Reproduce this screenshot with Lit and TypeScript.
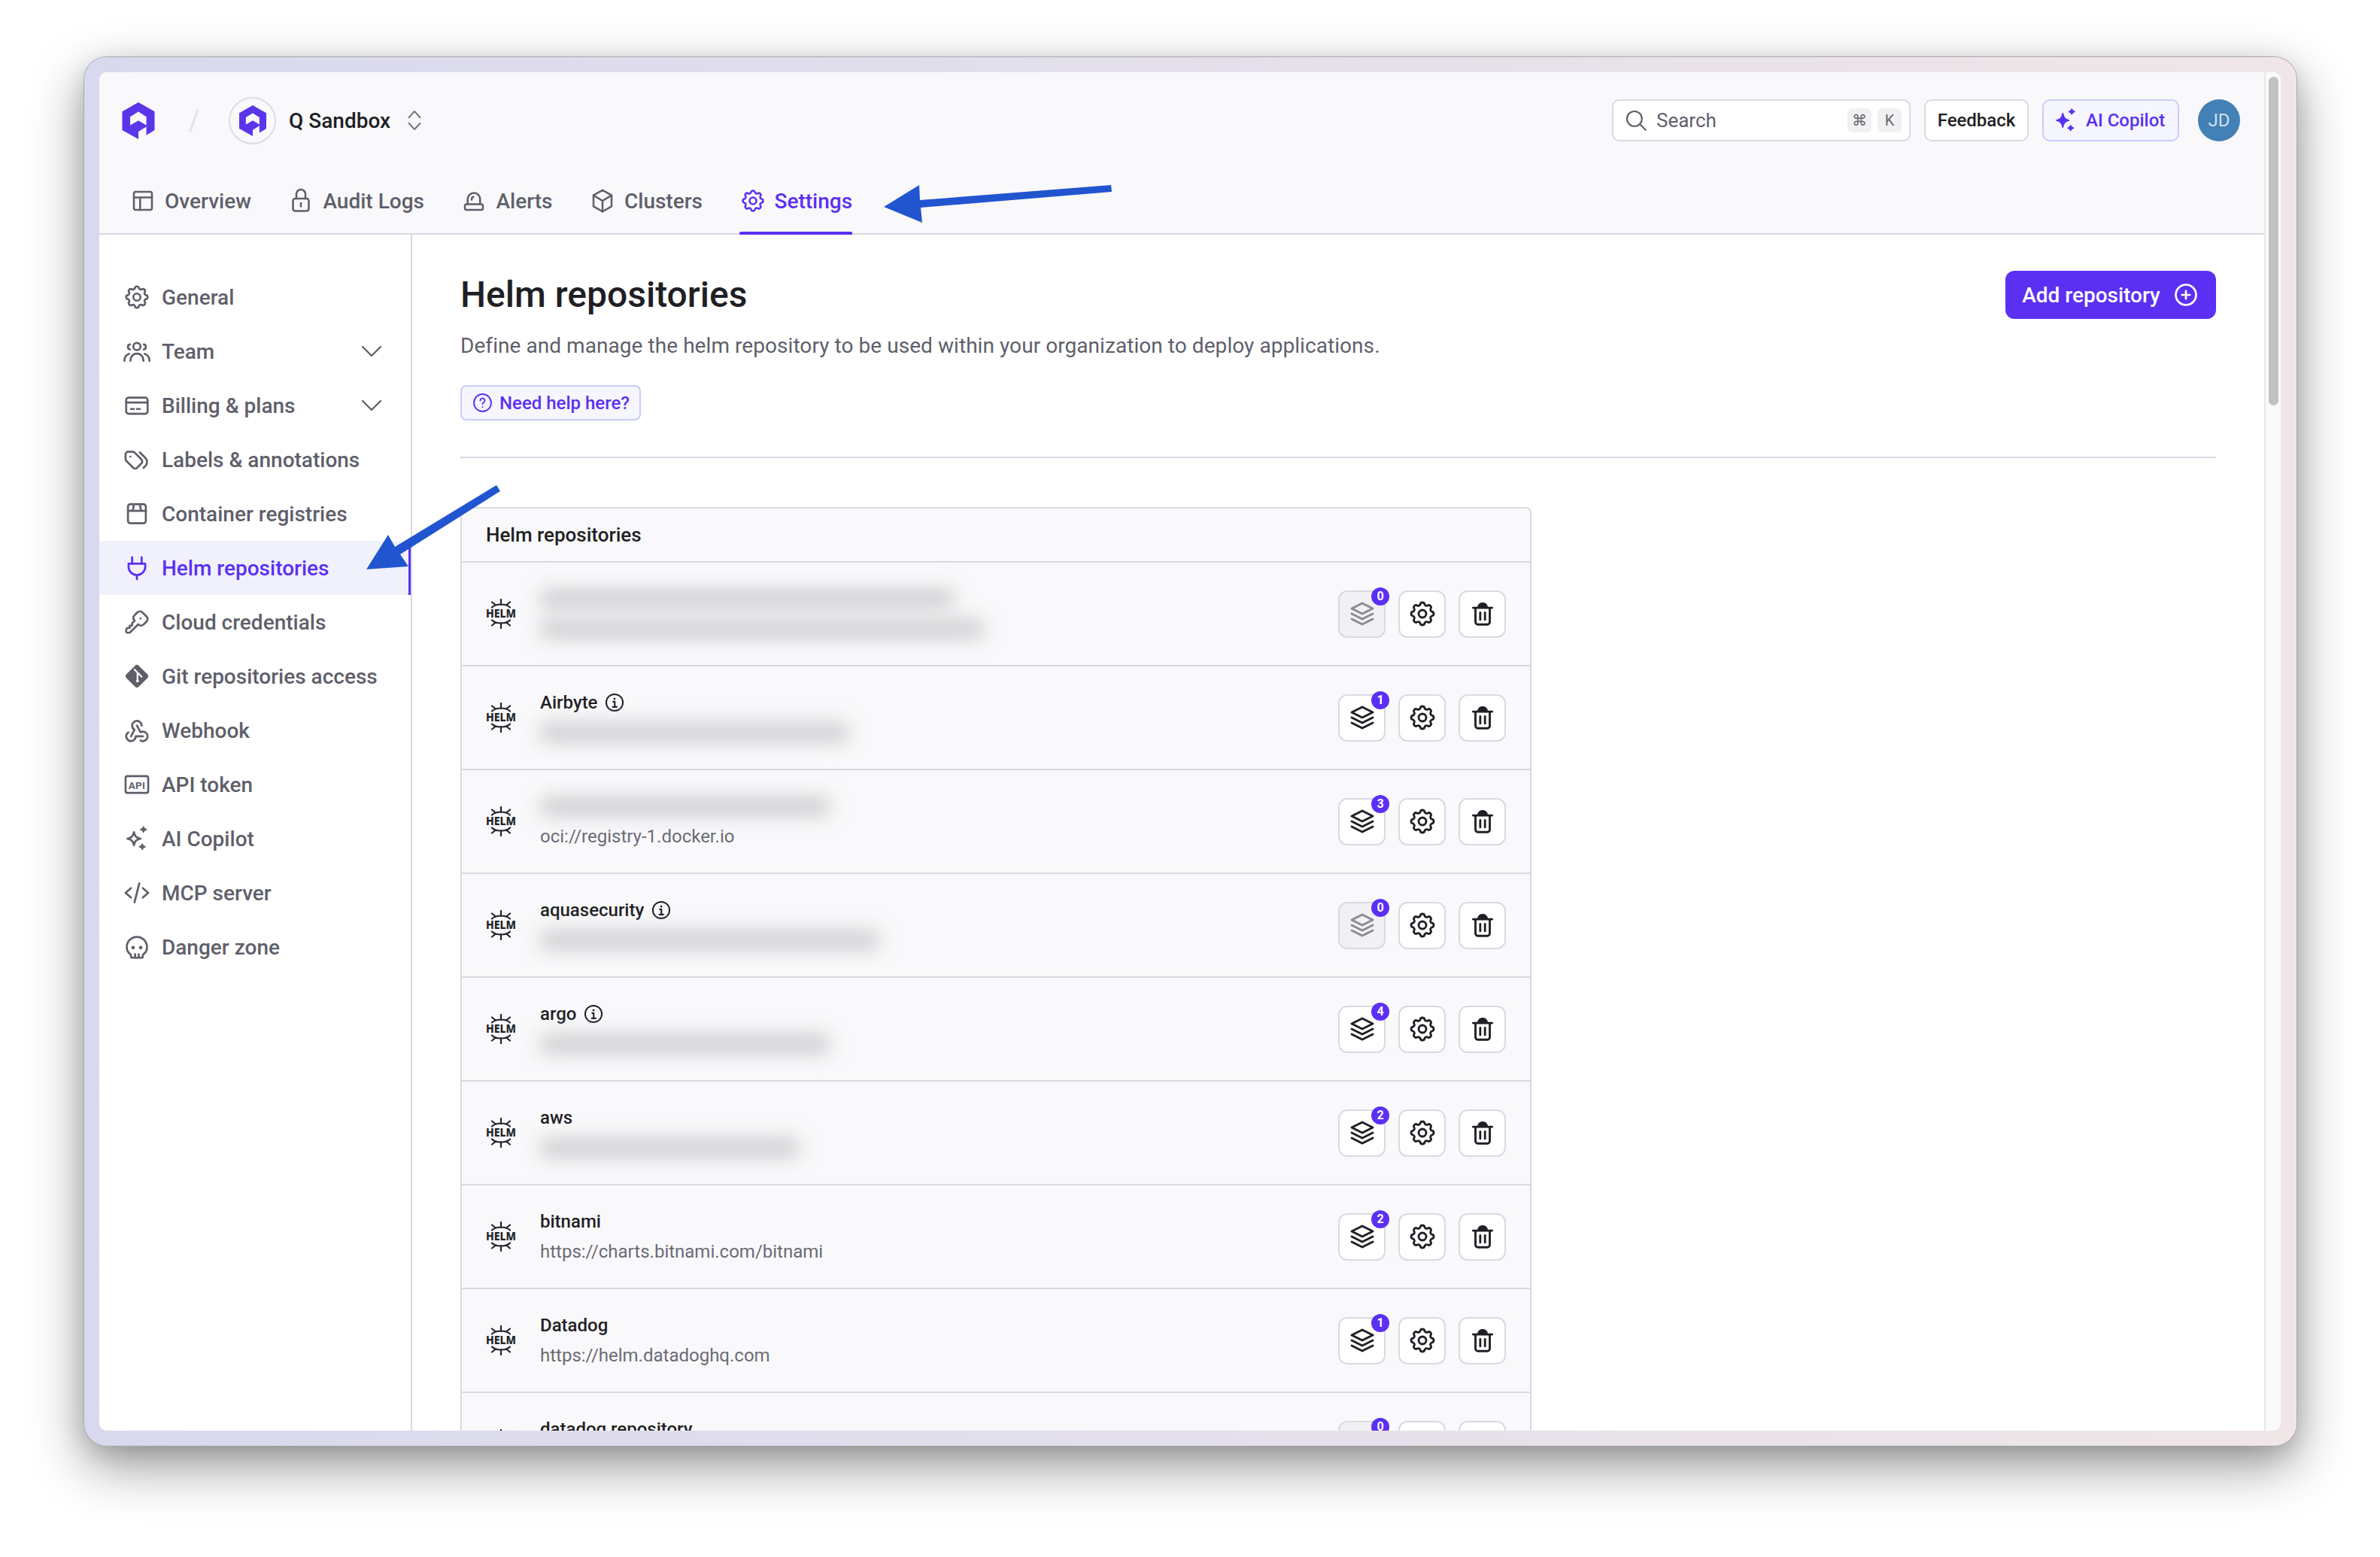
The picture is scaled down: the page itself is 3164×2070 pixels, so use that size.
import { LitElement, html, css, svg, nothing } from "lit";
import { customElement } from "lit/decorators.js";

const i = {
  gear: svg`<path d="M10.325 4.317c.426 -1.756 2.924 -1.756 3.35 0a1.724 1.724 0 0 0 2.573 1.066c1.543 -.94 3.31 .826 2.37 2.37a1.724 1.724 0 0 0 1.065 2.572c1.756 .426 1.756 2.924 0 3.35a1.724 1.724 0 0 0 -1.066 2.573c.94 1.543 -.826 3.31 -2.37 2.37a1.724 1.724 0 0 0 -2.572 1.065c-.426 1.756 -2.924 1.756 -3.35 0a1.724 1.724 0 0 0 -2.573 -1.066c-1.543 .94 -3.31 -.826 -2.37 -2.37a1.724 1.724 0 0 0 -1.065 -2.572c-1.756 -.426 -1.756 -2.924 0 -3.35a1.724 1.724 0 0 0 1.066 -2.573c-.94 -1.543 .826 -3.31 2.37 -2.37c1 .608 2.296 .07 2.572 -1.065z"/><circle cx="12" cy="12" r="3"/>`,
  team: svg`<circle cx="12" cy="8" r="3"/><path d="M6.5 20c0 -3.6 2.4 -6 5.5 -6s5.500 2.400 5.500 6"/><path d="M6.200 10.500a2.200 2.200 0 0 1 0 -4.300"/><path d="M17.800 10.500a2.200 2.200 0 0 0 0 -4.300"/><path d="M1.500 20c0 -3 1.300 -5 4 -5.800"/><path d="M22.500 20c0 -3 -1.300 -5 -4 -5.800"/>`,
  card: svg`<rect x="3" y="5.500" width="18" height="13.500" rx="2"/><path d="M3 9.500h18"/><path d="M7 15h2.500M12 15h2.500"/>`,
  tags: svg`<path d="M2.500 7.500v4.172a2 2 0 0 0 .586 1.414l5.710 5.710a2.410 2.410 0 0 0 3.408 0l3.592 -3.592a2.410 2.410 0 0 0 0 -3.408l-5.710 -5.710a2 2 0 0 0 -1.414 -.586h-4.172a2 2 0 0 0 -2 2z"/><path d="M17.500 19l1.592 -1.592a4.820 4.820 0 0 0 0 -6.816l-4.592 -4.592"/><path d="M6.500 9.500h-.01"/>`,
  box: svg`<rect x="4.500" y="4" width="15" height="16" rx="2"/><path d="M4.500 9.500h15"/><path d="M9.500 4.500l-1 5M14.500 4.500l1 5"/>`,
  plug: svg`<path d="M8 3v5.500M16 3v5.500"/><path d="M5 8.500h14v2.500a7 7 0 0 1 -14 0z"/><path d="M12 18v3.500"/>`,
  key: svg`<path d="M16.555 3.843l3.602 3.602a2.877 2.877 0 0 1 0 4.069l-2.643 2.643a2.877 2.877 0 0 1 -4.069 0l-.301 -.301l-6.558 6.558a2 2 0 0 1 -1.239 .578l-.175 .008h-1.172a1 1 0 0 1 -.993 -.883l-.007 -.117v-1.172a2 2 0 0 1 .467 -1.284l.119 -.14l.414 -.414h2v-2h2v-2l2.144 -2.144l-.301 -.301a2.877 2.877 0 0 1 0 -4.069l2.643 -2.643a2.877 2.877 0 0 1 4.069 0z"/><path d="M15 9h.01"/>`,
  git: svg`<rect x="5.500" y="5.500" width="13" height="13" rx="1.500" transform="rotate(45 12 12)" fill="currentColor"/><path d="M10 6.500l6 6M12.500 9v6.500" stroke="#fff" stroke-width="1.400"/><circle cx="12.500" cy="16" r="1.200" fill="#fff" stroke="none"/>`,
  hook: svg`<path d="M4.876 13.610a4 4 0 1 0 6.124 3.390h6"/><path d="M15.066 20.502a4 4 0 1 0 1.934 -7.502c-.706 0 -1.424 .179 -2 .500l-3 -5.500"/><path d="M16 8a4 4 0 1 0 -8 0c0 1.506 .770 2.818 2 3.500l-3 5.500"/>`,
  api: svg`<rect x="2.500" y="5" width="19" height="14" rx="1.500"/><text x="12" y="15.500" text-anchor="middle" font-family="Roboto, sans-serif" font-weight="700" font-size="8.500" letter-spacing=".2" fill="currentColor" stroke="none">API</text>`,
  spark: svg`<path d="M9.500 6.500c.8 3.500 1.700 4.700 5.500 5.500c-3.800 .8 -4.700 2 -5.500 5.500c-.8 -3.500 -1.700 -4.700 -5.500 -5.500c3.800 -.8 4.700 -2 5.500 -5.500z"/><path d="M17.500 2c.3 1.500 .7 1.900 2.500 2.300c-1.800 .4 -2.200 .8 -2.500 2.300c-.3 -1.500 -.7 -1.900 -2.500 -2.300c1.800 -.4 2.200 -.8 2.500 -2.300z" fill="currentColor" stroke-width="1"/><path d="M16.500 16.500c.3 1.500 .7 1.900 2.500 2.300c-1.800 .4 -2.200 .8 -2.500 2.300c-.3 -1.500 -.7 -1.900 -2.500 -2.300c1.800 -.4 2.200 -.8 2.500 -2.300z" fill="currentColor" stroke-width="1"/>`,
  sparkFill: svg`<path d="M9.500 6c.8 3.700 1.800 5 5.500 6c-3.700 1 -4.700 2.300 -5.500 6c-.8 -3.700 -1.800 -5 -5.500 -6c3.700 -1 4.700 -2.300 5.500 -6z" fill="currentColor"/><path d="M17.500 2c.3 1.500 .7 1.900 2.500 2.300c-1.800 .4 -2.200 .8 -2.500 2.300c-.3 -1.500 -.7 -1.900 -2.500 -2.300c1.800 -.4 2.200 -.8 2.500 -2.300z" fill="currentColor" stroke-width="1"/><path d="M16.500 16.500c.3 1.500 .7 1.900 2.500 2.300c-1.800 .4 -2.200 .8 -2.500 2.300c-.3 -1.500 -.7 -1.900 -2.500 -2.300c1.800 -.4 2.200 -.8 2.500 -2.300z" fill="currentColor" stroke-width="1"/>`,
  code: svg`<path d="M7 8l-4.500 4l4.500 4M17 8l4.500 4l-4.500 4M14 4l-4 16"/>`,
  skull: svg`<path d="M12 3.500a8.500 8.500 0 0 0 -8.500 8.500c0 2.900 1.400 5.200 3.500 6.500v1.500a1 1 0 0 0 1 1h8a1 1 0 0 0 1 -1v-1.500c2.100 -1.300 3.500 -3.600 3.500 -6.500a8.500 8.500 0 0 0 -8.500 -8.500z"/><circle cx="8.800" cy="12.500" r="1.500" fill="currentColor" stroke="none"/><circle cx="15.200" cy="12.500" r="1.500" fill="currentColor" stroke="none"/><path d="M10.500 18v3M13.500 18v3"/>`,
  layout: svg`<rect x="4" y="4" width="16" height="16" rx="1.500"/><path d="M4 9h16M9.500 9v11"/>`,
  lock: svg`<rect x="5" y="10" width="14" height="11" rx="2"/><path d="M8 10v-4a4 4 0 0 1 8 0v4"/><path d="M12 14v3"/>`,
  alarm: svg`<path d="M6.500 15v-4.500a5.500 5.500 0 0 1 11 0v4.500"/><rect x="4" y="15" width="16" height="5" rx="1.500"/><path d="M10 11a2.300 2.300 0 0 1 1.500 -2.500"/>`,
  cube: svg`<path d="M12 2.500l8 4.600v9.800l-8 4.600l-8 -4.600v-9.800z"/><path d="M4 7.100l8 4.900l8 -4.900M12 12v9.500"/>`,
  stack: svg`<path d="M12 4l-8 4l8 4l8 -4l-8 -4"/><path d="M4 12l8 4l8 -4"/><path d="M4 16l8 4l8 -4"/>`,
  trash: svg`<path d="M4 7h16"/><path d="M6 7v12a2 2 0 0 0 2 2h8a2 2 0 0 0 2 -2v-12"/><path d="M10 11v6M14 11v6"/><path d="M8.500 6.500a3 3 0 0 1 3 -3h1a3 3 0 0 1 3 3z" fill="currentColor"/>`,
  info: svg`<circle cx="12" cy="12" r="9.500"/><path d="M10.500 11h1.700v6M10 17h4.500" stroke-width="1.800"/><circle cx="12" cy="7.800" r="1.200" fill="currentColor" stroke="none"/>`,
  plus: svg`<circle cx="12" cy="12" r="9"/><path d="M8.500 12h7M12 8.500v7"/>`,
  help: svg`<circle cx="12" cy="12" r="9.500"/><path d="M9.500 9.500a2.500 2.500 0 1 1 3.800 2.100c-.8 .5 -1.300 1 -1.300 1.900"/><path d="M12 16.800v.01"/>`,
  search: svg`<circle cx="10.500" cy="10.500" r="7"/><path d="M21 21l-5.500 -5.500"/>`,
  updown: svg`<path d="M7 9.500l5 -5.500l5 5.500M7 14.500l5 5.500l5 -5.500"/>`,
  chevron: svg`<path d="M4 8l8 8l8 -8"/>`,
};

const icon = (g: unknown, size: number, sw = 2) => html`<svg class="ic" width=${size} height=${size} viewBox="0 0 24 24" fill="none" stroke="currentColor" stroke-width=${sw} stroke-linecap="round" stroke-linejoin="round">${g}</svg>`;

const logo = (w: number, h: number) => html`<svg width=${w} height=${h} viewBox="38 30 130 148"><path fill="#5b35ea" fill-rule="evenodd" d="M103 30L168 67V142L135 162V128L103 148V178L38 142V67ZM103 68L70 88V122L103 103L135 122V88Z"/></svg>`;

const helm = html`<svg class="helm" width="48" height="40" viewBox="-4 0 48 40" fill="none" stroke="#222228" stroke-width="2.200" stroke-linecap="round">
  <path d="M20 1v7M8 4.500l5 4M32 4.500l-5 4M8 11.500c3 -3 7.500 -4 12 -4s9 1 12 4"/>
  <path d="M20 39v-7M8 35.500l5 -4M32 35.500l-5 -4M8 28.500c3 3 7.500 4 12 4s9 -1 12 -4"/>
  <text x="20" y="25.400" text-anchor="middle" textLength="40" lengthAdjust="spacingAndGlyphs" font-family="'Noto Sans', Roboto, sans-serif" font-weight="800" font-size="15.500" fill="#222228" stroke="none">HELM</text>
</svg>`;

interface Nav { label: string; g: unknown; active?: boolean; expand?: boolean }
const NAV: Nav[] = [
  { label: "General", g: i.gear },
  { label: "Team", g: i.team, expand: true },
  { label: "Billing & plans", g: i.card, expand: true },
  { label: "Labels & annotations", g: i.tags },
  { label: "Container registries", g: i.box },
  { label: "Helm repositories", g: i.plug, active: true },
  { label: "Cloud credentials", g: i.key },
  { label: "Git repositories access", g: i.git },
  { label: "Webhook", g: i.hook },
  { label: "API token", g: i.api },
  { label: "AI Copilot", g: i.spark },
  { label: "MCP server", g: i.code },
  { label: "Danger zone", g: i.skull },
];

const TABS = [
  { label: "Overview", g: i.layout },
  { label: "Audit Logs", g: i.lock },
  { label: "Alerts", g: i.alarm },
  { label: "Clusters", g: i.cube },
  { label: "Settings", g: i.gear, active: true },
];

interface Repo { name?: string; nameBlur?: number; info?: boolean; url?: string; urlBlur?: number; count: number }
const REPOS: Repo[] = [
  { nameBlur: 550, urlBlur: 590, count: 0 },
  { name: "Airbyte", info: true, urlBlur: 410, count: 1 },
  { nameBlur: 385, url: "oci://registry-1.docker.io", count: 3 },
  { name: "aquasecurity", info: true, urlBlur: 450, count: 0 },
  { name: "argo", info: true, urlBlur: 385, count: 4 },
  { name: "aws", urlBlur: 345, count: 2 },
  { name: "bitnami", url: "https://charts.bitnami.com/bitnami", count: 2 },
  { name: "Datadog", url: "https://helm.datadoghq.com", count: 1 },
  { name: "datadog repository", urlBlur: 0, count: 0 },
];

@customElement("app-root")
export class AppRoot extends LitElement {
  static styles = css`
    :host {
      display: block; position: relative; box-sizing: border-box; width: 3164px; height: 2070px;
      padding: 76px 111px 148px 112px; background: #fff; overflow: hidden;
      font-family: Roboto, "Liberation Sans", sans-serif; color: #1f1f25;
      --purple: #5b30f3; --line: #d9d9e3; --muted: #5f5f6b;
    }
    * { box-sizing: border-box; }
    .ic { display: block; flex: none; }
    .frame {
      height: 100%; padding: 20px 21px 20px 20px; border-radius: 30px;
      background: linear-gradient(90deg, #d8d9ee, #f0e6e8);
      box-shadow: 0 0 0 1px #a8a8ac, 0 26px 70px rgba(0,0,0,.42), 0 8px 30px rgba(0,0,0,.12);
    }
    .window { display: flex; height: 100%; background: #fff; border-radius: 10px; overflow: hidden; }
    .page { flex: 1; min-width: 0; display: flex; flex-direction: column; }
    .scroll { flex: none; width: 22px; padding: 6px 3px 0 4px; background: #fafafa; border-left: 2px solid #e8e8ea; }
    .thumb { height: 437px; width: 13px; border-radius: 7px; background: #c1c1c1; }

    .head { flex: none; background: #f9f9fb; border-bottom: 2px solid var(--line); height: 216px; }
    .top { display: flex; align-items: center; height: 128px; padding: 0 32px 0 30px; }
    .slash { width: 14px; height: 30px; margin: 0 39px 0 45px; flex: none; }
    .org { width: 63px; height: 63px; border-radius: 50%; border: 2px solid #dcdce3; display: flex; align-items: center; justify-content: center; flex: none; }
    .orgname { margin-left: 17px; font-size: 28px; font-weight: 500; color: #1f1f25; }
    .updown { margin-left: 14px; color: #74747e; }
    .spacer { flex: 1; }
    .search { width: 397px; height: 56px; display: flex; align-items: center; background: #fff; border: 2px solid var(--line); border-radius: 10px; padding: 0 10px 0 13px; color: var(--muted); font-size: 26px; }
    .search span.t { margin-left: 10px; flex: 1; }
    .kbd { width: 32px; height: 32px; margin-left: 8px; border-radius: 6px; background: #f1f1f4; color: #66666f; font-size: 20px; display: flex; align-items: center; justify-content: center; }
    .btn { height: 56px; display: flex; align-items: center; border-radius: 10px; font-size: 24px; font-weight: 500; border: 2px solid var(--line); background: #fff; margin-left: 18px; }
    .feedback { width: 139px; justify-content: center; color: #1f1f25; }
    .copilot { width: 182px; padding-left: 11px; gap: 9px; background: #f5f6ff; border-color: #c9ccfb; color: var(--purple); }
    .avatar { width: 56px; height: 56px; margin-left: 25px; border-radius: 50%; background: #4380b5; color: #cfe0ef; font-size: 24px; display: flex; align-items: center; justify-content: center; }
    .tabs { display: flex; gap: 48.5px; height: 86px; padding-left: 40px; }
    .tab { display: flex; align-items: center; gap: 11px; font-size: 28px; font-weight: 500; color: var(--muted); position: relative; }
    .tab.on { color: var(--purple); }
    .tab.on::after { content: ""; position: absolute; left: 0; right: 0; bottom: -2px; height: 4px; background: var(--purple); border-radius: 2px 2px 0 0; }

    .body { flex: 1; min-height: 0; display: flex; }
    .side { flex: none; width: 416px; padding-top: 47px; border-right: 2px solid var(--line); }
    .nav { height: 72px; display: flex; align-items: center; padding: 0 34px 0 31px; gap: 14px; color: var(--muted); font-size: 28px; font-weight: 500; }
    .nav .lb { flex: 1; white-space: nowrap; }
    .nav.on { background: #f0f1fc; color: var(--purple); border-right: 3px solid var(--purple); }
    .nav .chev { color: var(--muted); }

    .content { flex: 1; min-width: 0; padding: 48px 64px 0; overflow: hidden; }
    .title-row { display: flex; justify-content: space-between; align-items: flex-start; }
    h1 { margin: 0; font-size: 48px; line-height: 64px; font-weight: 500; color: #1f1f25; }
    .desc { margin: 16px 0 0; font-size: 28px; line-height: 40px; color: var(--muted); letter-spacing: .06px; }
    .help { display: inline-flex; align-items: center; gap: 8px; height: 47px; margin-top: 32px; padding: 0 13px; border: 2px solid #c9ccfb; border-radius: 8px; background: #f5f6ff; color: var(--purple); font-size: 24px; font-weight: 500; }
    .add { width: 280px; height: 64px; display: flex; align-items: center; justify-content: center; gap: 16px; border-radius: 12px; background: var(--purple); color: #fff; font-size: 28px; font-weight: 500; }
    hr { border: 0; border-top: 2px solid var(--line); margin: 48px 0 65px; }

    .card { width: 1424px; border: 2px solid var(--line); border-bottom: 0; border-radius: 8px 8px 0 0; background: #f9f9fb; }
    .card-h { height: 72px; display: flex; align-items: center; padding-left: 32px; font-size: 26px; font-weight: 500; border-bottom: 2px solid var(--line); }
    .row { height: 138px; display: flex; align-items: center; padding: 0 32px 0 28px; border-bottom: 2px solid var(--line); }
    .helm { flex: none; }
    .text { flex: 1; min-width: 0; margin-left: 28px; display: flex; flex-direction: column; gap: 8px; }
    .name { display: flex; align-items: center; gap: 9px; font-size: 24px; line-height: 32px; font-weight: 500; color: #1f1f25; }
    .url { font-size: 24px; line-height: 32px; color: #6b6b76; }
    .blur-wrap { height: 32px; display: flex; align-items: center; }
    .blur { height: 26px; background: #cfcfd2; filter: blur(12px); border-radius: 8px; }
    .acts { display: flex; gap: 17px; flex: none; }
    .act { position: relative; width: 63px; height: 63px; display: flex; align-items: center; justify-content: center; background: #fff; border: 2px solid var(--line); border-radius: 12px; color: #1f1f25; }
    .act.off { background: #f1f1f4; color: #8a8a92; }
    .badge { position: absolute; top: -6px; right: -7px; width: 24px; height: 24px; border-radius: 50%; background: var(--purple); color: #fff; font-size: 16px; font-weight: 700; display: flex; align-items: center; justify-content: center; }
    .arrows { position: absolute; left: 0; top: 0; pointer-events: none; }
  `;

  private row(r: Repo) {
    return html`<div class="row">
      ${helm}
      <div class="text">
        ${r.name
          ? html`<div class="name">${r.name}${r.info ? icon(i.info, 28, 1.7) : nothing}</div>`
          : html`<div class="blur-wrap"><div class="blur" style="width:${r.nameBlur}px"></div></div>`}
        ${r.url
          ? html`<div class="url">${r.url}</div>`
          : html`<div class="blur-wrap"><div class="blur" style="width:${r.urlBlur}px"></div></div>`}
      </div>
      <div class="acts">
        <div class="act ${r.count === 0 ? "off" : ""}">${icon(i.stack, 42, 1.7)}<span class="badge">${r.count}</span></div>
        <div class="act">${icon(i.gear, 40, 1.7)}</div>
        <div class="act">${icon(i.trash, 38, 1.8)}</div>
      </div>
    </div>`;
  }

  render() {
    return html`
      <div class="frame"><div class="window">
        <div class="page">
          <header class="head">
            <div class="top">
              ${logo(44, 49)}
              <svg class="slash" viewBox="0 0 14 30"><path d="M12 1L2 29" stroke="#e3e3e8" stroke-width="3" stroke-linecap="round"/></svg>
              <div class="org">${logo(36, 41)}</div>
              <span class="orgname">Q Sandbox</span>
              <span class="updown">${icon(i.updown, 36, 1.300)}</span>
              <div class="spacer"></div>
              <div class="search">${icon(i.search, 34, 1.500)}<span class="t">Search</span><span class="kbd">⌘</span><span class="kbd">K</span></div>
              <div class="btn feedback">Feedback</div>
              <div class="btn copilot">${icon(i.sparkFill, 36, 1.200)}<span>AI Copilot</span></div>
              <div class="avatar">JD</div>
            </div>
            <nav class="tabs">
              ${TABS.map((t) => html`<div class="tab ${t.active ? "on" : ""}">${icon(t.g, 36, 1.700)}<span>${t.label}</span></div>`)}
            </nav>
          </header>
          <div class="body">
            <aside class="side">
              ${NAV.map((n) => html`<div class="nav ${n.active ? "on" : ""}">
                ${icon(n.g, 38, 1.700)}<span class="lb">${n.label}</span>
                ${n.expand ? html`<span class="chev">${icon(i.chevron, 36, 1.500)}</span>` : nothing}
              </div>`)}
            </aside>
            <main class="content">
              <div class="title-row">
                <div>
                  <h1>Helm repositories</h1>
                  <p class="desc">Define and manage the helm repository to be used within your organization to deploy applications.</p>
                  <div class="help">${icon(i.help, 29, 1.600)}<span>Need help here?</span></div>
                </div>
                <div class="add"><span>Add repository</span>${icon(i.plus, 36, 1.800)}</div>
              </div>
              <hr />
              <section class="card">
                <div class="card-h">Helm repositories</div>
                ${REPOS.map((r) => this.row(r))}
              </section>
            </main>
          </div>
        </div>
        <div class="scroll"><div class="thumb"></div></div>
      </div></div>
      <svg class="arrows" width="3164" height="2070" viewBox="0 0 3164 2070">
        <polygon fill="#2155d0" points="1175,275 1222,246 1223,266 1477,246 1478,255 1224,276 1226,296" />
        <polygon fill="#2155d0" points="487,757 516,711 525,727 660,645 665,653 532,737 543,753" />
      </svg>
    `;
  }
}
